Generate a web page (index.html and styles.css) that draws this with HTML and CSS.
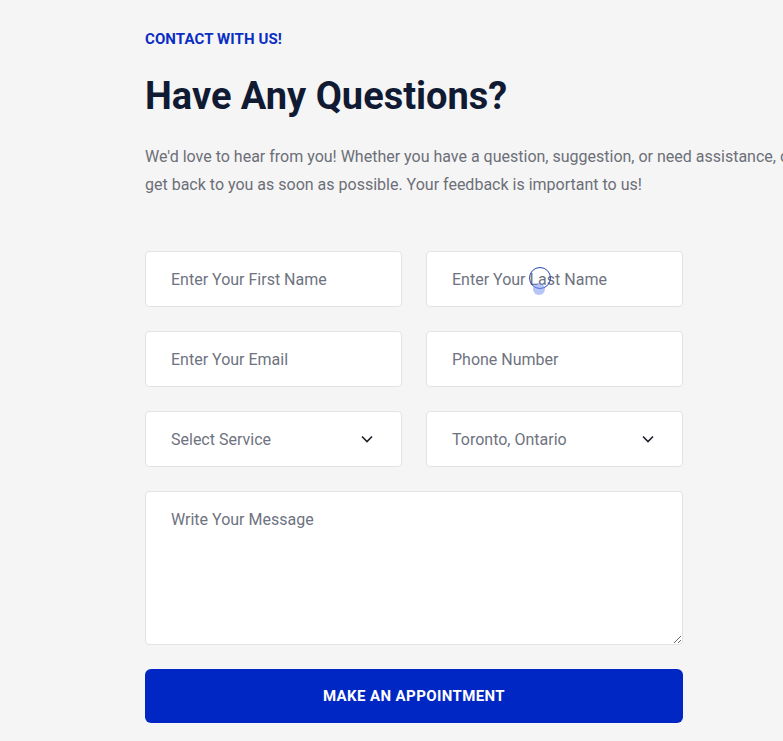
FILE: index.html
```html
<!DOCTYPE html>
<html lang="en">
<head>
<meta charset="utf-8">
<title>Contact</title>
<link rel="stylesheet" href="styles.css">
</head>
<body>
<section class="contact">
  <p class="eyebrow">CONTACT WITH US!</p>
  <h1 class="title">Have Any Questions?</h1>
  <p class="lead">We'd love to hear from you! Whether you have a question, suggestion, or need assistance, our team will<br>get back to you as soon as possible. Your feedback is important to us!</p>
  <form class="form">
    <input class="field" type="text" placeholder="Enter Your First Name">
    <div class="field-wrap">
      <input class="field" type="text" placeholder="Enter Your Last Name">
      <span class="cursor-ring"></span>
      <span class="cursor-dot"></span>
    </div>
    <input class="field" type="email" placeholder="Enter Your Email">
    <input class="field" type="tel" placeholder="Phone Number">
    <div class="select">
      <span>Select Service</span>
      <svg class="chev" width="12" height="8" viewBox="0 0 12 8"><path d="M1 1.5 6 6.5 11 1.5" fill="none" stroke="#1b1f2a" stroke-width="1.6"/></svg>
    </div>
    <div class="select">
      <span>Toronto, Ontario</span>
      <svg class="chev" width="12" height="8" viewBox="0 0 12 8"><path d="M1 1.5 6 6.5 11 1.5" fill="none" stroke="#1b1f2a" stroke-width="1.6"/></svg>
    </div>
    <textarea class="field message" placeholder="Write Your Message"></textarea>
    <button class="submit" type="button">MAKE AN APPOINTMENT</button>
  </form>
</section>
</body>
</html>
```
FILE: styles.css
```css
html, body {
  margin: 0;
  padding: 0;
  background: #f5f5f5;
  overflow: hidden;
}
body {
  font-family: Roboto, "Liberation Sans", sans-serif;
  width: 783px;
  height: 741px;
}
.contact {
  padding: 30px 0 0 145px;
  width: 800px;
}
.eyebrow {
  margin: 0;
  color: #0a2ec4;
  font-weight: 700;
  font-size: 15px;
  line-height: 18px;
  letter-spacing: 0.1px;
}
.title {
  margin: 24px 0 0;
  color: #111a33;
  font-size: 38px;
  line-height: 48px;
  font-weight: 700;
  letter-spacing: 0;
}
.lead {
  margin: 23px 0 0;
  width: 760px;
  color: #6c6f78;
  font-size: 16px;
  line-height: 28px;
  white-space: nowrap;
}
.form {
  margin-top: 52px;
  width: 538px;
  display: grid;
  grid-template-columns: 257px 257px;
  column-gap: 24px;
  row-gap: 24px;
}
.field-wrap {
  position: relative;
}
.field {
  box-sizing: border-box;
  width: 100%;
  height: 56px;
  border: 1px solid #e2e3e6;
  border-radius: 4px;
  background: #fff;
  padding: 0 25px;
  font-family: Roboto, "Liberation Sans", sans-serif;
  font-size: 16px;
  color: #1b1f2a;
  outline: none;
  display: block;
}
.field::placeholder {
  color: #6e7380;
}
.select {
  box-sizing: border-box;
  height: 56px;
  border: 1px solid #e2e3e6;
  border-radius: 4px;
  background: #fff;
  padding: 0 28px 0 25px;
  display: flex;
  align-items: center;
  justify-content: space-between;
  font-size: 16px;
  color: #6e7380;
}
.message {
  grid-column: 1 / 3;
  height: 154px;
  padding-top: 18px;
  resize: vertical;
  line-height: 20px;
}
.submit {
  grid-column: 1 / 3;
  height: 54px;
  border: 0;
  border-radius: 6px;
  background: #0027c4;
  color: #fff;
  font-family: Roboto, "Liberation Sans", sans-serif;
  font-size: 15px;
  font-weight: 700;
  letter-spacing: 0.4px;
}
.cursor-ring {
  position: absolute;
  left: 103px;
  top: 16px;
  width: 22px;
  height: 22px;
  box-sizing: border-box;
  border: 1.5px solid #2a45b8;
  border-radius: 50%;
}
.cursor-dot {
  position: absolute;
  left: 107px;
  top: 32px;
  width: 12px;
  height: 12px;
  border-radius: 50%;
  background: rgba(120, 150, 240, 0.55);
}
```
